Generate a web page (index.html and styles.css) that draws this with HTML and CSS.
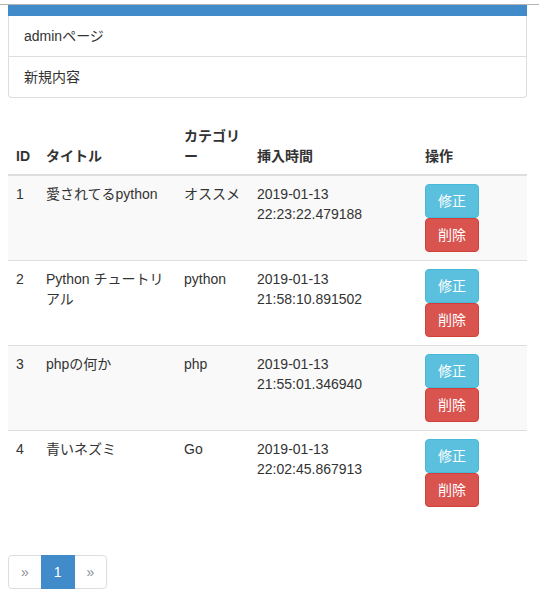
FILE: index.html
```html
<!DOCTYPE html>
<html lang="ja">
<head>
<meta charset="utf-8">
<title>admin</title>
<link rel="stylesheet" href="styles.css">
</head>
<body>
<div class="topline"></div>
<div class="container">
  <div class="list-group">
    <div class="lg-active"></div>
    <div class="lg-item">adminページ</div>
    <div class="lg-item lg-last">新規内容</div>
  </div>

  <table class="table">
    <colgroup>
      <col class="c-id"><col class="c-title"><col class="c-cat"><col class="c-time"><col class="c-op">
    </colgroup>
    <thead>
      <tr>
        <th>ID</th>
        <th>タイトル</th>
        <th class="wrap-loose">カテゴリー</th>
        <th>挿入時間</th>
        <th>操作</th>
      </tr>
    </thead>
    <tbody>
      <tr class="odd">
        <td>1</td>
        <td>愛されてるpython</td>
        <td>オススメ</td>
        <td>2019-01-13 22:23:22.479188</td>
        <td><div class="ops"><a class="btn btn-info">修正</a><a class="btn btn-danger">削除</a></div></td>
      </tr>
      <tr>
        <td>2</td>
        <td>Python チュートリアル</td>
        <td>python</td>
        <td>2019-01-13 21:58:10.891502</td>
        <td><div class="ops"><a class="btn btn-info">修正</a><a class="btn btn-danger">削除</a></div></td>
      </tr>
      <tr class="odd">
        <td>3</td>
        <td>phpの何か</td>
        <td>php</td>
        <td>2019-01-13 21:55:01.346940</td>
        <td><div class="ops"><a class="btn btn-info">修正</a><a class="btn btn-danger">削除</a></div></td>
      </tr>
      <tr>
        <td>4</td>
        <td>青いネズミ</td>
        <td>Go</td>
        <td>2019-01-13 22:02:45.867913</td>
        <td><div class="ops"><a class="btn btn-info">修正</a><a class="btn btn-danger">削除</a></div></td>
      </tr>
    </tbody>
  </table>

  <ul class="pagination">
    <li class="pg-item pg-first">»</li>
    <li class="pg-item pg-active">1</li>
    <li class="pg-item pg-last">»</li>
  </ul>
</div>
</body>
</html>
```

FILE: styles.css
```css
* { box-sizing: border-box; }

html, body {
  margin: 0;
  padding: 0;
  background: #fff;
}

body {
  font-family: "Liberation Sans", Arial, "Noto Sans CJK JP", sans-serif;
  font-size: 14px;
  line-height: 20px;
  color: #333;
}

.topline {
  height: 5px;
  border-bottom: 1px solid #b4b4b4;
}

.container {
  padding: 0 12px 0 8px;
}

.list-group {
  margin-bottom: 20px;
}

.lg-active {
  height: 11px;
  background: #428bca;
}

.lg-item {
  padding: 10px 15px;
  border: 1px solid #ddd;
  border-top: none;
  height: 41px;
}

.lg-last {
  border-radius: 0 0 4px 4px;
}

.table {
  width: 100%;
  border-collapse: collapse;
  border-spacing: 0;
  table-layout: fixed;
  margin-bottom: 40px;
}

.c-id { width: 30px; }
.c-title { width: 138px; }
.c-cat { width: 73px; }
.c-time { width: 168px; }
.c-op { width: auto; }

.table th,
.table td {
  padding: 8px;
  text-align: left;
  line-height: 20px;
}

.table th {
  font-weight: bold;
  vertical-align: bottom;
  border-bottom: 2px solid #ddd;
}

.wrap-loose {
  line-break: loose;
}

.table td {
  vertical-align: top;
  border-top: 1px solid #ddd;
}

.table thead + tbody tr:first-child td {
  border-top: none;
}

.table tbody tr:last-child td {
  border-bottom: none;
}

.table tr.odd td {
  background: #f9f9f9;
}

.ops {
  display: flex;
  flex-direction: column;
  align-items: flex-start;
}

.btn {
  display: inline-block;
  padding: 6px 12px;
  font-size: 14px;
  line-height: 20px;
  border: 1px solid transparent;
  border-radius: 4px;
  color: #fff;
  text-align: center;
  white-space: nowrap;
}

.btn-info {
  background: #5bc0de;
  border-color: #46b8da;
}

.btn-danger {
  background: #d9534f;
  border-color: #d43f3a;
}

.pagination {
  display: flex;
  list-style: none;
  margin: 20px 0;
  padding: 0;
}

.pg-item {
  padding: 6px 12px;
  line-height: 20px;
  border: 1px solid #ddd;
  margin-left: -1px;
  color: #8a8f99;
  background: #fff;
}

.pg-first {
  margin-left: 0;
  border-radius: 4px 0 0 4px;
}

.pg-last {
  border-radius: 0 4px 4px 0;
}

.pg-active {
  background: #428bca;
  border-color: #428bca;
  color: #fff;
  position: relative;
  z-index: 1;
}
```
